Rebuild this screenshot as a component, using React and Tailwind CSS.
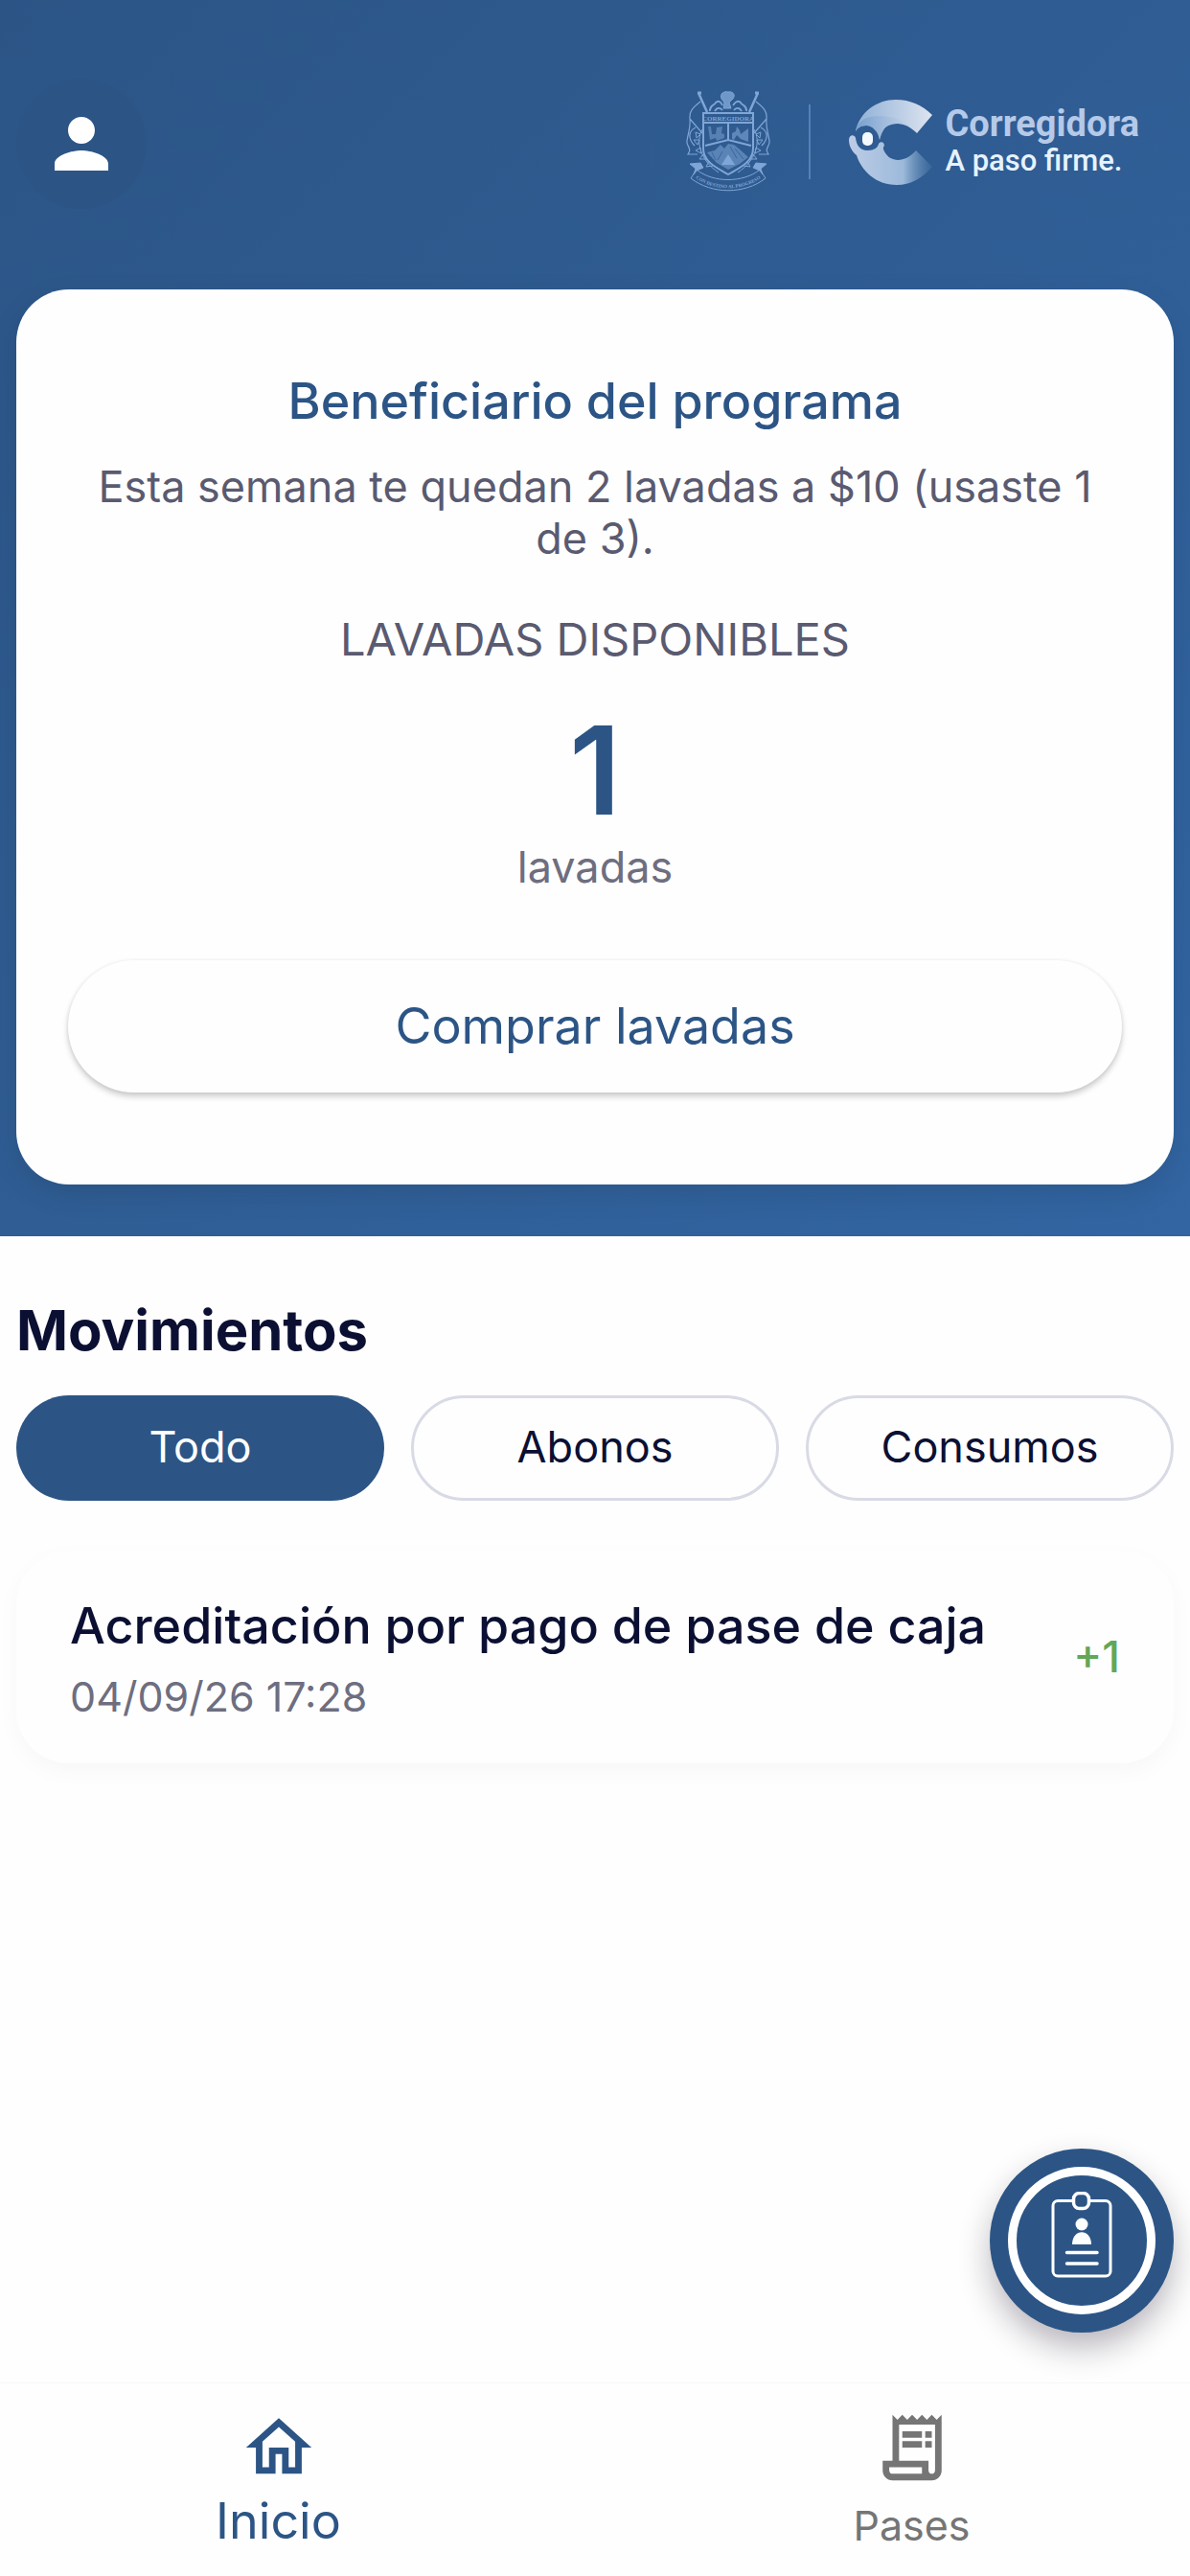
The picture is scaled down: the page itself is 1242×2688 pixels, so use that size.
import React, { useState } from 'react';
import { MdPerson, MdOutlineHome, MdOutlineReceiptLong } from 'react-icons/md';

const FILTERS = ['Todo', 'Abonos', 'Consumos'];

const MOVEMENTS = [
    { id: 1, type: 'Abonos', title: 'Acreditación por pago de pase de caja', date: '04/09/26 17:28', amount: '+1' },
];

function CityCrest() {
    return (
        <svg viewBox="0 0 88 106" className="w-[88px] h-[106px] shrink-0" fill="none" stroke="#7fa6d6" strokeWidth="1" aria-hidden="true">
            {/* flag poles and flags */}
            <path d="M13 2 L22 22 M75 2 L66 22" strokeWidth="2.5" />
            <path d="M12 2h4M72 2h4" strokeWidth="3" />
            <path d="M15 11 C9 16 3 20 4 29 C5 38 2 44 1 52 C0 57 6 60 3 64 L2 66 L12 66 M10 38 C2 42 2 50 9 57 M4 29 L17 44" strokeWidth="1.2" />
            <path d="M73 11 C79 16 85 20 84 29 C83 38 86 44 87 52 C88 57 82 60 85 64 L86 66 L76 66 M78 38 C86 42 86 50 79 57 M84 29 L71 44" strokeWidth="1.2" />
            {/* helmet and plume */}
            <path d="M37 8 C35 2 40 0 44 1 C49 0 52 4 49 8 L45 12 L47 18 H39 L40 12 Z" fill="#7fa6d6" fillOpacity=".8" />
            <path d="M25 21 C24 15 30 15 31 12 C34 9 37 12 38 15 M63 21 C64 15 58 15 57 12 C54 9 51 12 49 15 M30 21 C32 17 36 17 38 20 M58 21 C56 17 52 17 50 20" strokeWidth="1.8" />
            {/* shield */}
            <path d="M18 23 H70 V60 C70 74 56 80 44 87 C32 80 18 74 18 60 Z" strokeWidth="2" />
            <path d="M19 33 H69 M44 33 V51 M20 57 L44 51 L68 57" strokeWidth="2" />
            <path d="M23 37l2 14 6-2 1 3 8-3 0-4-3-1 1-7-6 1-1 7-4 0-1-8z" fill="#7fa6d6" fillOpacity=".5" stroke="none" />
            <path d="M48 50v-6l4-2 1-5 3 4 1 4 8-6v14l-8-3-4-4-3 5z" fill="#7fa6d6" fillOpacity=".6" stroke="none" />
            <path d="M22 64 L30 62 L36 56 L40 60 L44 55 L50 56 L55 60 L65 69 L56 76 L44 82 L32 75 Z" fill="#7fa6d6" fillOpacity=".55" stroke="none" />
            <path d="M44 66 L51 77 H37 Z" fill="#7fa6d6" stroke="none" />
            <path d="M38 63 L33 72 M51 60 L60 71 M46 58 L53 70 M27 64 L31 72" stroke="#3a669f" />
            {/* laurel */}
            <path d="M17 40 C10 52 14 72 34 85 M71 40 C78 52 74 72 54 85" />
            <path d="M15 45l-5-2 1 6zM14 51l-6 0 4 5zM15 59l-5 3 6 3zM18 66l-4 5 7 0zM24 73l-3 6 7-1zM73 45l5-2-1 6zM74 51l6 0-4 5zM73 59l5 3-6 3zM70 66l4 5-7 0zM64 73l3 6-7-1z" />
            {/* ribbon */}
            <path d="M4 76 L15 75 L18 80 L11 83 L8 87 L10 81 Z M84 76 L73 75 L70 80 L77 83 L80 87 L78 81 Z" fill="#7fa6d6" />
            <path d="M11 82 C28 96 60 96 77 82 L83 91 C61 108 27 108 5 91 Z" />
            <text x="44" y="31" textAnchor="middle" fontSize="7" stroke="none" fill="#7fa6d6" fontFamily="Liberation Serif, serif" fontWeight="700">CORREGIDORA</text>
            <path id="ribbon-line" d="M9 90 C28 105 60 105 79 90" stroke="none" />
            <text fontSize="5" stroke="none" fill="#7fa6d6" fontFamily="Liberation Serif, serif" fontWeight="700">
                <textPath href="#ribbon-line" startOffset="50%" textAnchor="middle">CON DESTINO AL PROGRESO</textPath>
            </text>
        </svg>
    );
}

function CityLogo() {
    return (
        <svg viewBox="0 0 88 90" className="w-[88px] h-[90px] shrink-0" aria-hidden="true">
            <defs>
                <linearGradient id="arc-top" x1="0" y1="0" x2="1" y2="0">
                    <stop offset="0" stopColor="#8fb0d6" />
                    <stop offset="1" stopColor="#dde4f0" />
                </linearGradient>
                <linearGradient id="arc-mid" x1="0" y1="0" x2="1" y2="0">
                    <stop offset="0" stopColor="#769fcd" />
                    <stop offset="1" stopColor="#b9cbe4" stopOpacity="0" />
                </linearGradient>
                <linearGradient id="arc-low" x1="0" y1="0" x2="1" y2="0">
                    <stop offset="0" stopColor="#bccce6" />
                    <stop offset=".65" stopColor="#9dbadb" />
                    <stop offset="1" stopColor="#41709f" stopOpacity=".5" />
                </linearGradient>
            </defs>
            <path d="M7 34 C11 14 29 1 49 1 C64 1 77 7 87 17 L71 36 C62 27 53 24 44 27 C36 29 34 36 32 43 C31 34 24 28 18 28 C12 28 9 31 7 34 Z" fill="url(#arc-top)" />
            <path d="M7 34 C9 22 20 17 34 18 C48 19 60 22 71 36 C62 27 53 24 44 27 C36 29 34 36 32 43 C31 34 24 28 18 28 C12 28 9 31 7 34 Z" fill="url(#arc-mid)" />
            <path d="M0 43 C0 37 6 37 7 41 C8 49 12 54 19 54 C27 54 30 51 31 47 C33 44 37 45 37 49 C35 51 36 53 37 55 C43 67 59 67 70 54 L87 71 C77 83 64 90 50 90 C28 90 13 75 8 59 C3 55 0 49 0 43 Z" fill="url(#arc-low)" />
            <rect x="14" y="35" width="11" height="14" rx="5" fill="#f4f9ff" />
        </svg>
    );
}

function BadgeIcon() {
    return (
        <svg viewBox="0 0 64 90" className="w-16 h-[90px]" fill="none" stroke="#ffffff" strokeWidth="3" aria-hidden="true">
            <path d="M22 9.500H7 a5 5 0 0 0-5 5 V83 a5 5 0 0 0 5 5 H57 a5 5 0 0 0 5-5 V14.500 a5 5 0 0 0-5-5 H41" />
            <rect x="23.500" y="1.500" width="16" height="16" rx="6" strokeWidth="3.500" />
            <circle cx="32" cy="34" r="6.500" fill="#ffffff" stroke="none" />
            <path d="M22 55 C22 38 42 38 42 55 Z" fill="#ffffff" stroke="none" />
            <path d="M16.500 63.500 H48 M16.500 75 H48" strokeWidth="3.500" strokeLinecap="round" />
        </svg>
    );
}

function Header() {
    return (
        <header className="flex items-center justify-between pr-9">
            <button type="button" aria-label="Perfil" className="flex items-center justify-center size-[136px] rounded-full bg-[#2c5586] text-white">
                <MdPerson className="size-[84px]" />
            </button>
            <div className="flex items-center pb-1">
                <CityCrest />
                <div className="w-[2px] h-[78px] mx-10 bg-[#5481b8]" />
                <CityLogo />
                <div className="ml-3 font-[Roboto,sans-serif]">
                    <p className="text-[38px] leading-[40px] font-bold text-[#b5c9e8]">Corregidora</p>
                    <p className="text-[31px] leading-[38px] font-medium text-[#e6f3ff]">A paso firme.</p>
                </div>
            </div>
        </header>
    );
}

function BalanceCard() {
    return (
        <section className="mt-[84px] flex flex-col items-center rounded-[55px] bg-[#fefefe] px-[54px] pt-[81px] pb-24 text-center shadow-[0_10px_30px_rgba(0,0,0,0.1)]">
            <h1 className="text-[52px] leading-[72px] font-medium text-[#2c5586]">Beneficiario del programa</h1>
            <p className="mt-[26px] text-[45px] leading-[54px] text-[#5a5a70]">
                Esta semana te quedan 2 lavadas a $10 (usaste 1 de 3).
            </p>
            <p className="mt-[42px] text-[47px] leading-[72px] text-[#5a5a70]">LAVADAS DISPONIBLES</p>
            <p className="mt-8 text-[128px] leading-[138px] font-semibold text-[#2c5586]">1</p>
            <p className="mt-[5px] text-[45px] leading-[54px] text-[#6e6e80]">lavadas</p>
            <button
                type="button"
                className="mt-[70px] h-[138px] w-full rounded-full bg-[#fefefe] text-[52px] text-[#2c5586] shadow-[0_4px_6px_rgba(0,0,0,0.2),0_0_4px_rgba(0,0,0,0.06)]"
            >
                Comprar lavadas
            </button>
        </section>
    );
}

function MovementRow({ title, date, amount }) {
    return (
        <li className="flex items-center justify-between rounded-[55px] bg-[#fefefe] px-14 py-[43px] shadow-[0_8px_24px_rgba(0,0,0,0.03)]">
            <div>
                <p className="text-[52px] leading-[72px] font-medium text-[#0b1033]">{title}</p>
                <p className="mt-2.5 text-[43px] leading-[54px] text-[#6e6e80]">{date}</p>
            </div>
            <span className="text-[45px] leading-[72px] font-medium text-[#62a758]">{amount}</span>
        </li>
    );
}

export default function App() {
    const [filter, setFilter] = useState('Todo');
    const rows = MOVEMENTS.filter((m) => filter === 'Todo' || m.type === filter);

    return (
        <div className="flex min-h-screen flex-col bg-[#fefefe] font-[Inter,sans-serif]">
            <div className="bg-linear-to-br from-[#2c5586] to-[#3265a2] px-[17px] pt-[82px] pb-[54px]">
                <Header />
                <BalanceCard />
            </div>

            <main className="relative flex-1 px-[17px] pt-[62px]">
                <h2 className="text-[58px] leading-[72px] font-bold text-[#0b1033]">Movimientos</h2>
                <div className="mt-8 grid grid-cols-3 gap-7">
                    {FILTERS.map((name) => (
                        <button
                            key={name}
                            type="button"
                            onClick={() => setFilter(name)}
                            className={
                                filter === name
                                    ? 'h-[110px] rounded-full bg-[#2c5586] pb-0.5 text-[45px] text-white'
                                    : 'h-[110px] rounded-full border-3 border-[#d8dbe5] pb-0.5 text-[45px] text-[#0b1033]'
                            }
                        >
                            {name}
                        </button>
                    ))}
                </div>
                <ul className="mt-[52px] flex flex-col gap-7">
                    {rows.map((m) => (
                        <MovementRow key={m.id} title={m.title} date={m.date} amount={m.amount} />
                    ))}
                </ul>

                {/* floating credential button */}
                <button
                    type="button"
                    aria-label="Credencial"
                    className="absolute right-[17px] bottom-[52px] flex size-48 items-center justify-center rounded-full bg-[#2c5586] shadow-[0_16px_32px_rgba(30,20,40,0.3)]"
                >
                    <span className="flex size-[154px] items-center justify-center rounded-full border-9 border-white pb-3">
                        <BadgeIcon />
                    </span>
                </button>
            </main>

            <nav className="grid grid-cols-2 gap-20 border-t border-[#f7f7f8] pt-[26px] pb-[13px]">
                <a href="#inicio" className="flex flex-col items-center text-[#2c5586]">
                    <MdOutlineHome className="size-[82px]" />
                    <span className="text-[52px] leading-[72px]">Inicio</span>
                </a>
                <a href="#pases" className="flex flex-col items-center text-[#757575]">
                    <MdOutlineReceiptLong className="size-[82px]" />
                    <span className="text-[43px] leading-[80px]">Pases</span>
                </a>
            </nav>
        </div>
    );
}
